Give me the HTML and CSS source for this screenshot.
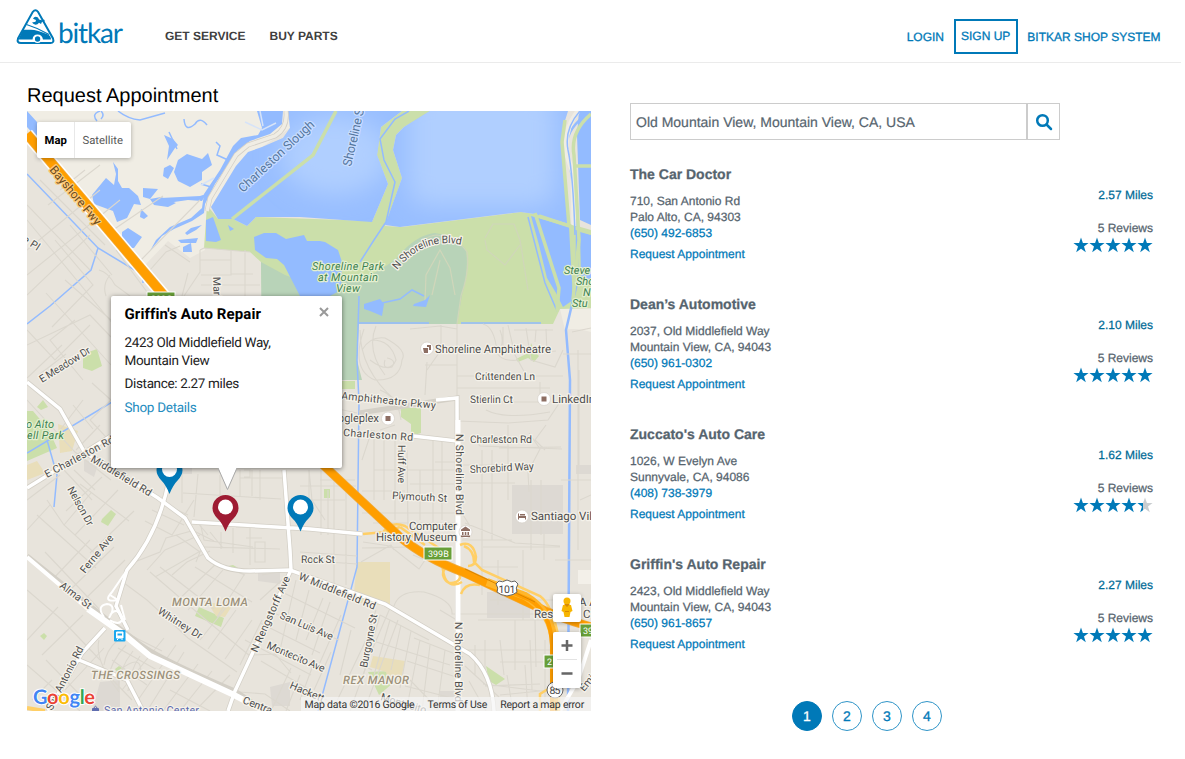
FILE: index.html
```html
<!DOCTYPE html>
<html lang="en">
<head>
<meta charset="utf-8">
<title>bitkar - Request Appointment</title>
<link rel="stylesheet" href="styles.css">
</head>
<body>
<svg width="0" height="0" class="defs" aria-hidden="true">
  <symbol id="star" viewBox="0 0 16 16"><path d="M8 .5 9.9 6H15.6L11 9.500 12.800 15.200 8 11.700 3.200 15.200 5 9.500.4 6H6.100Z"/></symbol>
</svg>
<header class="header">
  <a class="logo">
    <svg width="110" height="40" viewBox="15 8 110 40">
      <path class="logo-line" d="M32.800 11.800Q35.500 8.800 38 11.800L53 38.500Q54.500 43 50.500 43H21Q16.500 43 18 38.500Z"/>
      <path class="logo-fill" d="M23 29.800H31Q37 30 48 34.500 51 36 51 39.500H43Q42 34.500 37.500 34.500 33 34.500 32.500 39.500H18.500Z"/>
      <path class="logo-thin" d="M26.500 24.500Q38 28 49 34.500"/>
      <circle class="logo-wheel" cx="37.600" cy="39" r="3.300"/>
      <path class="logo-fill" d="M32 22.500 35.500 21.700 36 20 33 18.800Q34.500 15.500 38 17.500L39 19.500 42 20.300 44 19.500 45 21.300 42 21.800 41 24 39 22.700 37.500 24.300Q34 25.500 32 22.500Z"/>
      <text class="logo-text" x="58" y="43" textLength="65">bitkar</text>
    </svg>
  </a>
  <nav class="nav"><a>GET SERVICE</a><a>BUY PARTS</a></nav>
  <nav class="account"><a>LOGIN</a><a class="signup">SIGN UP</a><a>BITKAR SHOP SYSTEM</a></nav>
</header>
<main class="main">
  <section class="left">
    <h1>Request Appointment</h1>
    <div class="map">
      <svg class="map-art" width="564" height="600" viewBox="27 111 564 600">
        <defs>
          <filter id="soft" x="-50%" y="-50%" width="200%" height="200%"><feGaussianBlur stdDeviation="12"/></filter>
          <clipPath id="lagoon"><path d="M430 111H568L562 130 569 224 535 214 521 212 400 227 385 225 402 178 393 150 396 135 404 127Z"/></clipPath>
          <clipPath id="bay"><path d="M288 111H402L381 127 377 155 388 184 372 222 300 217 256 217 247 226 233 219 218 219 211 207 236 166 248 152 262 147 283 138 290 128Z"/></clipPath>
        </defs>
        <rect x="27" y="111" width="564" height="600" fill="#e8e4dc"/>
        <!-- salt marsh -->
        <path fill="#f0ede4" d="M40 111H290L290 128 262 147 236 166 211 207 205 250 190 258 168 241 145 265 130 250 27 130V111Z"/>
        <path fill="#f0ede4" d="M560 309H591V332Q575 327 565 330Z"/>
        <!-- parks -->
        <g fill="#cbdfaa">
          <path d="M207 205 218 219 233 219 247 226 256 217 372 221 385 226 402 227 521 212 535 214 591 230V308L560 309 553 324H359L300 300 262 296 261 262 250 252 204 248Z"/>
          <path d="M402 111 381 127 377 155 388 184 372 222 385 226 402 178 393 150 396 135 404 127 432 111Z"/>
          <path d="M83 354 97 349 102 366 92 371 83 368ZM37 407 43 400 48 407 41 410ZM27 411H33L49 430 57 448 27 461ZM342 381H355V389H342ZM401 408H421V433L411 436V424L401 417ZM516 359 530 352 531 343 535 352 539 356 534 362 528 358 518 362ZM102 519 111 510 116 514 108 526 101 522ZM224 567 233 565 240 569 234 572 226 570ZM195 616 199 607 224 618 221 627ZM40 636 44 633 47 636 44 640ZM115 669 119 666 124 669 117 672ZM368 672 390 671 393 683 379 695ZM486 666 505 679 496 685 489 681ZM324 489H330V498H324Z"/>
        </g>
        <path fill="#b8d3b8" d="M261 262 285 275 307 283 360 280Q380 271 396 259 415 235 435 233 456 236 466 250 469 270 462 295L457 324H359L357 360 362 380H262Z"/>
        <path d="M403 262Q420 236 437 235 458 238 467 252 470 270 461 296L457 324M485 238 493 224 514 224 520 240 528 290M485 240 487 250 505 265 520 245M425 302 426 275 440 250 450 268 455 295M432 295 440 260" fill="none" stroke="#d0d6ba" stroke-width="1.200"/>
        <g fill="#e9deba"><path d="M58 424 78 431 72 451 60 453ZM27 465 37 461 45 473 27 480ZM357 562H390V606L353 602ZM373 656 405 661 400 684 388 680 386 672 370 667ZM207 602 232 606 225 617 216 616Z"/></g>
        <g fill="#ddd9d3"><path d="M84 459 98 465 94 477 84 471ZM100 682 120 680V711H92ZM258 570H280V584L258 581ZM512 485H563V534H512ZM487 592H530V618H487ZM270 687 290 682V706H272ZM576 465H591V474H576ZM177 466H192V474H177ZM440 691H458V711H440Z"/></g>
        <!-- bay and ponds -->
        <g clip-path="url(#bay)"><rect x="200" y="111" width="210" height="120" fill="#98beff"/><ellipse cx="335" cy="155" rx="55" ry="40" fill="#b0cfff" filter="url(#soft)"/></g>
        <g clip-path="url(#lagoon)"><rect x="380" y="111" width="195" height="120" fill="#98beff"/><rect x="408" y="90" width="148" height="116" rx="20" fill="#b0cfff" filter="url(#soft)"/></g>
        <g fill="#93bbff">
          <path d="M257 111H283L282 124 270 134 250 141 238 150 215 184 205 204 204 213 192 221 174 229 162 236 150 251 156 240 170 227 191 218 202 208 204 194 220 170 233 146 241 138 258 135 262 128Z"/>
          <path d="M92 195 106 178 114 185 116 174 113 162 118 169 118 181 122 188 129 188 138 196 141 205 134 204 127 218 117 222 113 211 94 204ZM122 232 128 228 142 237 134 248 129 248 122 242ZM143 188 158 189 150 199 143 197ZM141 209 148 216 144 219 140 217ZM164 168 170 165 174 168 168 179 163 176ZM178 160 187 154 202 159 208 153 212 165 202 172 202 180 190 187 178 181 174 172ZM150 199 161 197 176 203 168 207 154 205ZM161 198 200 196 206 194 202 201 188 200 174 202 162 201ZM185 233 191 228 202 225 196 230 187 235ZM178 240 198 238 196 243 181 243ZM183 247 191 243 192 252 183 252ZM206 220 213 217 221 240 216 242 206 241ZM27 111 37 122V138L27 127ZM228 225 234 229 230 231ZM169 146 164 135 173 139 178 145 175 148 167 160Z"/>
          <path d="M254 237 264 233 276 233 286 239 304 235 307 241 320 241 325 242 338 250 342 262 341 290 330 296H311L300 296 284 265 277 259 266 258 255 250Z"/>
          <path d="M531 216 569 227 573 300 563 307 556 293 547 278 539 245ZM579 111H591V225L580 220 577 135ZM364 304 380 299 384 304 382 316 370 311 364 309ZM414 304 425 300 430 295 426 307 413 306ZM580 232 591 235V280L581 276Z"/>
        </g>
        <g class="stream">
          <path d="M424 296 412 290 400 299 382 303M358 323H429M461 323H541M100 111Q91 114 97 121M101 111Q105 115 101 119M118 111Q128 119 140 120L165 113M184 119Q185 133 195 124 200 116 207 125M216 142 220 146 217 155 228 160M169 132 177 149M211 187 201 184"/>
          <path d="M27 174 98 248 143 275V283M98 248 91 270 50 306 27 324M360 262 374 240 386 222 395 182 384 160 380 139 395 119 409 111M359 296 357 360 359 402 357 567 318 711M137 387 27 453 M47 440 57 475 54 507M528 217 545 283 557 311"/>
        </g>
        <path class="stream big" d="M591 111Q564 129 567 150 573 173 577 235V283L566 330 570 380 568 711"/>
        <path d="M578 111Q563 130 567 155L573 173 574 226" stroke="#f0ede4" stroke-width="5" fill="none"/>
        <path d="M591 114Q570 132 574 155L579 240 573 300M535 213 559 288 557 311M539 216 591 233M574 166H591M565 120 562 142 569 226M336 111 313 155 232 219" stroke="#cbdfaa" stroke-width="3.500" fill="none"/>
        <path d="M580 111Q564 129 568 150 573 173 575 235" class="stream"/>
        <path d="M260 111 263 126M245 122 262 130 276 123M201 185 214 178" stroke="#d6e3f8" stroke-width="1.500" fill="none"/>
        <path d="M286 111Q288 128 275 136L248 145 236 155 210 198 207 211" class="edge"/><path d="M286 111Q288 128 275 136L248 145 236 155 210 198 207 211" stroke="#f0ede4" stroke-width="3.500" fill="none"/>
        <!-- minor streets -->
        <g class="minor">
          <path d="M27 220 118 330M27 205 90 270M27 250 100 190M27 275 120 200M40 180 105 245M60 190 85 170M48 205 100 165M70 225 112 275M27 295 90 235M55 240 93 285 52 327M27 345 90 315 111 337M27 330 55 360 90 325M46 293 111 365M65 280 111 320M75 320 50 340 83 380M62 345 27 378M99 270Q108 272 115 285L130 296M110 275Q102 285 106 296M116 250 150 296M150 270 166 252 180 246M113 230 163 196M139 262 200 200"/>
          <path d="M200 250 204 248 250 252M200 250V272L184 296M200 260H231V275H201M231 250V275M245 250V296M231 274H253M201 285H260M190 262 165 245M188 273 182 296M27 400 75 452 111 480M92 383 111 400M40 374 66 354M83 400 60 430M100 425 76 450M73 405 93 429M111 400 90 420 120 452M64 470 92 500M27 500 60 475M74 470 95 490 M102 477 66 511 M80 484 129 521M47 500 64 525 102 560M37 515 96 568M27 530 50 505M64 525 91 493 M75 535 118 490M90 553 134 511M52 580 90 540M70 590 114 547M82 602 125 560M27 590 62 620 100 660M45 552 100 610M27 640 58 607M42 655 83 615M27 665 80 711M65 690 104 648M52 680 32 700M46 660 85 700"/>
          <path d="M145 521 172 535 194 500M152 510 184 525M166 505 188 515M132 563 160 552 166 538 195 530M147 570 165 550 200 535M155 577 204 549M172 575 187 562 210 551M176 535 200 552 196 562M188 528 214 541M197 522 208 535M120 580 147 600 188 638 237 672M150 572 206 620 250 656M160 567 214 609M195 567 252 602M207 560 245 575M188 610 223 570M175 603 217 563M217 617 244 575M208 649 236 610M200 640 228 605M225 659 252 620M240 665 262 620M164 638 122 690M176 645 138 700M184 652 147 711M198 664 163 711M212 671 180 711M130 635 162 651M118 648 157 670M112 660 147 685M105 672 132 700M99 640Q94 660 119 692M118 640Q106 650 104 665M126 645Q110 662 108 680M133 651Q118 670 118 690M140 656Q130 670 128 691M190 670 222 690M170 690 210 711M230 675 195 711M120 670Q145 650 140 680"/>
          <path d="M182 470V503M198 474 194 517M183 493 281 499M220 475V495M240 470V496M240 478H285M252 470V496M260 470V500M244 470H250V477H244M255 542H265V562H255ZM236 527H293M250 527V565M246 538H262M262 575 290 570M200 522 204 540 253 547M204 547 280 549M233 528V553M221 532V549M210 532 223 548M260 600 282 580M240 680 254 655 275 654 291 673M245 640 311 675M260 623 320 653M269 611 339 640M280 591 355 628M261 661 330 702M291 668 271 711M300 675 286 711M315 660 300 700M331 652 314 690M341 615 318 667M351 630 340 675M296 580 280 650M309 590 296 640M323 598 306 640M330 602 312 655M239 692 265 694 290 711M335 705 366 640 376 610M350 711 372 650 390 608M364 711 398 620"/>
          <path d="M309 470V498M321 470V535M334 470V590M346 489V585M300 486H356M300 527 357 535M300 552 357 556M361 562 391 545 394 550M362 548 410 547M363 542 390 546 419 569 425 560 413 555M300 560 357 564M309 470 312 500 325 520M320 480H355M328 490V535M345 500H310M362 460 372 430M362 491H405M374 430V500M384 437V500M395 440V520M407 450 408 530M420 470V520M433 440V540M442 440V520M362 513H457M373 523H455M395 535H457M374 470H456M410 484H458M435 462H458M360 330Q360 370 395 400M364 329Q350 370 375 380 400 381 402 360 408 350 385 338 370 336 362 350M372 340Q391 340 396 360 390 375 370 360M385 360Q382 370 392 367 397 360 387 358M376 326Q366 350 385 375M410 329 440 326 457 329M457 324V398M427 362 425 395M425 365H457M427 370 441 350 441 325M360 413 380 408 401 410M380 390Q398 397 401 420M320 405 357 413M341 432 356 435M380 430 395 425"/>
          <path d="M483 324Q495 327 497 353 502 362 519 360M496 354Q506 345 500 330M503 327V350M508 325 515 355 526 375M514 330H553M526 328 531 360 555 367 563 350M536 330 535 342M546 329 547 352 556 351M457 376H563M457 388H550M477 402H540V382M486 410Q505 420 550 412M457 421 508 423 548 420 560 402M546 425 535 440 545 450M529 433 540 449 528 472 529 492M499 448 561 447M508 425V500M482 450V540M492 450V540M470 436 480 446 562 449M462 483H515M465 523 515 543 560 546M482 510V595M483 547H560M460 510 470 526M479 567H518M498 560V605M523 550V620M531 480V550M541 480V535M462 540H512M544 534V560M578 350V550M561 480H591M555 560H591M579 370V465M580 500 591 495M563 354H591M572 332 591 328M457 465H505"/>
          <path d="M394 606Q399 590 424 592 453 600 452 614L549 614M380 615 362 680M390 620 374 675M401 625 391 670M411 631 400 688M420 640 408 702M430 645 422 711M445 650 437 711M370 640 450 665M380 615 429 640M362 665 372 670M407 661 456 677M414 638 463 657M405 686 460 700M410 680 440 711M440 610 460 622M463 650 515 650V620M475 645V675M485 640V670M500 640 504 675M515 640V670M530 640 532 690M490 650H552M500 662H555M485 686 540 684M500 695 550 690M507 675 513 711M525 665 528 711M545 640V704M490 600H553M478 620H550M535 620 536 667M465 666 499 697M469 681 486 711M483 684 540 691"/>
        </g>
        <!-- major streets -->
        <g class="edge"><path d="M27 382 60 409 85 453 106 465 158 498 185 518 208 558Q223 571 250 571L290 570 385 604 470 654Q492 673 494 711"/><path d="M27 488 111 436M169 480Q158 535 127 570L116 606 128 630M27 556 100 614 135 640Q150 655 235 691L265 711M105 628 82 653 48 711M79 660 127 680 143 711M284 470 290 550 291 570 235 691 228 711M192 522 310 529 362 534M359 413 457 398 458 711M413 436 457 441"/></g>
        <g class="major"><path d="M27 382 60 409 85 453 106 465 158 498 185 518 208 558Q223 571 250 571L290 570 385 604 470 654Q492 673 494 711"/><path d="M27 488 111 436M169 480Q158 535 127 570L116 606 128 630M105 628 82 653 48 711M79 660 127 680 143 711M284 470 290 550 291 570 235 691 228 711M192 522 310 529 362 534M436 400 457 398 458 711M413 436 457 441"/><path d="M127 570 110 595 118 600M104 617Q96 606 107 604 117 605 109 618M113 591Q101 603 118 600M110 615Q118 605 122 620 119 626 110 620M121 605 125 620" stroke-width="2"/></g>
        <path d="M27 557 88 609 122 633" fill="none" stroke="#fff" stroke-width="4"/><path d="M88 609 122 633 150 656 232 694 265 711" fill="none" stroke="#fff" stroke-width="6"/>
        <path d="M458 420V711" stroke="#fff" stroke-width="5"/>
        <path d="M578 570H591V584H578Z" fill="#f3f0e9"/><path d="M591 640 578 680 560 711" stroke="#fff" stroke-width="4" fill="none"/>
        <!-- highway ramps -->
        <g fill="none" stroke="#ffcf66" stroke-width="2.500">
          <path d="M363 534 385 532 400 527M382 534Q390 520 405 526L445 552M460 545Q473 540 476 557 476 566 468 566M458 570Q443 563 443 575 446 586 456 582 464 578 456 570M442 562Q443 575 446 580 452 588 462 582M461 594Q465 582 480 585M464 546Q474 550 474 562L482 570 540 596Q553 606 559 640V711M540 711V694L553 686M400 527 425 545"/>
        </g>
        <path d="M27 708 45 711" stroke="#ffcf66" stroke-width="4"/>
        <!-- freeway -->
        <path d="M27 134 172 305" stroke="#fff" stroke-width="13"/><path d="M27 134 172 305" stroke="#f0aa3a" stroke-width="10"/><path d="M27 134 172 305" stroke="#ff9e00" stroke-width="8.500"/>
        <g fill="none"><path d="M320 462 400 537Q425 558 465 573L535 606Q556 617 591 627" stroke="#f0aa3a" stroke-width="9"/><path d="M320 462 400 537Q425 558 465 573L535 606Q556 617 591 627" stroke="#ff9e00" stroke-width="7.500"/>
        <path d="M487 582 525 596Q553 612 554 645V711" stroke="#ffb62b" stroke-width="8"/><path d="M500 587 530 600Q551 613 552 645V711" stroke="#ff9e00" stroke-width="4"/><path d="M465 569 535 602" stroke="#d98500" stroke-width="1"/></g>
        <!-- exit signs -->
        <g class="exit"><rect x="147" y="292" width="28" height="13"/><rect x="424" y="547" width="28" height="13"/><rect x="544" y="655" width="14" height="13"/><rect x="580" y="624" width="16" height="13"/>
        <text x="151" y="302">399C</text><text x="428" y="557">399B</text><text x="547" y="665">2</text><text x="583" y="634">39</text></g>
        <path class="shield" d="M499 581Q502 583 507 580 512 583 515 581L518 584Q515 588 517 592 514 595 507 596 500 595 497 592 499 588 496 584Z"/><text x="498.500" y="592.500" class="route" textLength="17">101</text>
        <circle class="shield" cx="555" cy="690" r="8"/><text x="549.500" y="694" class="route" textLength="11">85</text>
        <!-- places -->
        <g class="poi-disc"><circle cx="427" cy="348.500" r="6.500"/><circle cx="388" cy="418.500" r="6.500"/><circle cx="544" cy="399" r="6.500"/><circle cx="522" cy="516.500" r="6.500"/><circle cx="465.500" cy="532" r="6.500"/></g>
        <g fill="#8d6e63"><path d="M423 348H428V353H424ZM427 345H431V350H429V347H427ZM385.500 416H390.500V421H385.500ZM541.500 396.500H546.500V401.500H541.500ZM518 513.500H519V516H526V519.500H525V518H519V519.500H518ZM520 514H525V515.500H520ZM461 529.500 465.500 526.500 470 529.500V531H461ZM462 532H463.500V535H462ZM464.800 532H466.300V535H464.800ZM467.500 532H469V535H467.500ZM461 535.500H470V537H461Z"/></g>
        <rect x="114" y="630" width="11.500" height="11.500" rx="1" fill="#1aa7ee"/><path d="M116.500 632H123V638H116.500ZM117 640 118.500 638.500M122.500 640 121 638.500" fill="#fff" stroke="#fff"/><path d="M117.500 633.500H122V635.500H117.500Z" fill="#1aa7ee"/>
        <rect x="92" y="708" width="7" height="5" rx="1" fill="#5f6db0"/><path d="M94 708Q95.500 704.500 97 708" fill="none" stroke="#5f6db0"/>
        <g class="labels">
          <text class="hw" transform="translate(49 170) rotate(50)" textLength="73">Bayshore Fwy</text>
          <text class="sea" transform="translate(243 193) rotate(-43)" textLength="99">Charleston Slough</text>
          <text class="sea" transform="translate(351 167) rotate(-77)" textLength="59">Shoreline S</text>
          <text transform="translate(22 241) rotate(33)" textLength="18">e Pl</text>
          <text transform="translate(213 277) rotate(88)">Mari</text>
          <path id="shore-curve" fill="none" stroke="none" d="M397 270Q424 236 462 245"/><text><textPath href="#shore-curve" textLength="73">N Shoreline Blvd</textPath></text>
          <g class="park"><text x="312" y="270" textLength="72">Shoreline Park</text><text x="318" y="281" textLength="60">at Mountain</text><text x="336" y="292" textLength="24">View</text><text x="564" y="274">Steve</text><text x="576" y="285">Sho</text><text x="583" y="296">N</text><text x="572" y="307">Stu</text><text x="26" y="428" textLength="28">o Alto</text><text x="27" y="439" textLength="37">ell Park</text></g>
          <text transform="translate(42 383) rotate(-32)" textLength="58">E Meadow Dr</text>
          <text transform="translate(47 478) rotate(-28)" textLength="77">E Charleston Rd</text>
          <text transform="translate(90 461) rotate(31)" textLength="69">Middlefield Rd</text>
          <text transform="translate(67 489) rotate(61)" textLength="43">Nelson Dr</text>
          <text transform="translate(85 574) rotate(-51)" textLength="46">Ferne Ave</text>
          <text transform="translate(59 587) rotate(37)" textLength="37">Alma St</text>
          <text transform="translate(157 613) rotate(32)" textLength="50">Whitney Dr</text>
          <text transform="translate(52 711) rotate(-63)" textLength="70">San Antonio Rd</text>
          <text transform="translate(257 653) rotate(-66)" textLength="82">N Rengstorff Ave</text>
          <text transform="translate(279 618) rotate(23)" textLength="57">San Luis Ave</text>
          <text transform="translate(266 648) rotate(23)" textLength="62">Montecito Ave</text>
          <text transform="translate(289 688) rotate(23)">Hackett</text>
          <text transform="translate(242 703) rotate(21)">Centra</text>
          <text transform="translate(298 579) rotate(22)" textLength="82">W Middlefield Rd</text>
          <text x="301" y="563" textLength="34">Rock St</text>
          <text transform="translate(367 668) rotate(-79)" textLength="54">Burgoyne St</text>
          <text transform="translate(380 700) rotate(17)">Montecito</text>
          <text transform="translate(341 399) rotate(6)" textLength="95">Amphitheatre Pkwy</text>
          <text transform="translate(343 436) rotate(4)" textLength="70">Charleston Rd</text>
          <text transform="translate(398 445) rotate(90)" textLength="38">Huff Ave</text>
          <text transform="translate(456 434) rotate(90)" textLength="81">N Shoreline Blvd</text>
          <text transform="translate(455 622) rotate(90)" textLength="80">N Shoreline Blvd</text>
          <text x="475" y="380" textLength="60">Crittenden Ln</text><text x="470" y="403" textLength="43">Stierlin Ct</text>
          <text transform="translate(470 443)" textLength="62">Charleston Rd</text><text transform="translate(470 473) rotate(-3)" textLength="64">Shorebird Way</text>
          <text transform="translate(392 499) rotate(3)" textLength="55">Plymouth St</text>
          <text x="435" y="353" class="poi" textLength="116">Shoreline Amphitheatre</text><text x="552" y="403" class="poi">LinkedIn</text><text x="324" y="422" class="poi" textLength="55">Googleplex</text>
          <text x="531" y="520" class="poi">Santiago Vil</text><text x="409" y="530" class="poi" textLength="48">Computer</text><text x="376" y="541" class="poi" textLength="81">History Museum</text>
          <text x="534" y="618" class="poi">Res</text><text x="579" y="606" class="poi">A A</text><text x="583" y="618" class="poi">C</text>
          <g class="district"><text x="172" y="606" textLength="76">MONTA LOMA</text><text x="91" y="679" textLength="89">THE CROSSINGS</text><text x="343" y="684" textLength="66">REX MANOR</text></g>
          <text x="104" y="714" class="shop" textLength="95">San Antonio Center</text>
          <text transform="translate(584 692) rotate(-50)">Emi</text>
        </g>
        <g class="google"><text x="33" y="703.500" textLength="62"><tspan fill="#4285f4">G</tspan><tspan fill="#ea4335">o</tspan><tspan fill="#fbbc05">o</tspan><tspan fill="#4285f4">g</tspan><tspan fill="#34a853">l</tspan><tspan fill="#ea4335">e</tspan></text></g>
        <!-- shop markers -->
        <g id="pins"><path fill="#0079b8" d="M169.500 494Q166 485 161 480 156.500 475 156.500 470A13 13 0 0 1 182.500 470Q182.500 475 178 480 173 485 169.500 494Z"/><circle cx="169.500" cy="469.500" r="7.500" fill="#fff"/>
        <path fill="#9e1b32" d="M225.500 531.500Q222 522.500 217 518 212.500 513 212.500 508A13 13 0 0 1 238.500 508Q238.500 513 234 518 229 522.500 225.500 531.500Z"/><circle cx="225.500" cy="507" r="7.500" fill="#fff"/>
        <path fill="#0079b8" d="M300.500 531.500Q297 522.500 292 518 287.500 513 287.500 508A13 13 0 0 1 313.500 508Q313.500 513 309 518 304 522.500 300.500 531.500Z"/><circle cx="300.500" cy="507" r="7.500" fill="#fff"/></g>
      </svg>
      <div class="map-type"><span class="on">Map</span><span>Satellite</span></div>
      <div class="popup">
        <svg class="close" width="10" height="10" viewBox="0 0 10 10"><path d="M1 1 9 9M9 1 1 9"/></svg>
        <svg class="tail" width="22" height="24" viewBox="0 0 22 24"><path d="M1 0 10.500 22.500 20 0Z" fill="#fff"/><path d="M1 1 10.500 22.500 20 1" fill="none" stroke="#aaa"/></svg>
        <h2>Griffin's Auto Repair</h2>
        <p>2423 Old Middlefield Way,<br>Mountain View</p>
        <p>Distance: 2.27 miles</p>
        <a>Shop Details</a>
      </div>
      <div class="pegman"><svg width="14" height="22" viewBox="0 0 14 22"><circle cx="7" cy="4" r="3.500" fill="#f7b500"/><path d="M3 8H11L12.500 14 10.500 15 9.500 20H4.500L3.500 15 1.500 14Z" fill="#f7b500"/><path d="M4 7H10L7 10ZM5 14H9V15H5Z" fill="#d98a00"/></svg></div>
      <div class="zoom"><svg width="28" height="56" viewBox="0 0 28 56"><path d="M14 8V19M8.500 13.500H19.500M8.500 41.500H19.500" stroke="#666" stroke-width="2.500"/><path d="M4 27.500H24" stroke="#e3e3e3"/></svg></div>
      <div class="credits"><span>Map data ©2016 Google</span><span>Terms of Use</span><span>Report a map error</span></div>
    </div>
  </section>
  <section class="right">
    <div class="search"><div class="field">Old Mountain View, Mountain View, CA, USA</div><div class="go"><svg width="18" height="18" viewBox="0 0 18 18"><circle cx="7.500" cy="7.500" r="5.300"/><path d="M11.500 11.500 16 16"/></svg></div></div>
    <article class="shop-row"><div><h3>The Car Doctor</h3><p>710, San Antonio Rd<br>Palo Alto, CA, 94303</p><a>(650) 492-6853</a><a class="request">Request Appointment</a></div><div class="rating"><b>2.57 Miles</b><span>5 Reviews</span><div class="stars"><svg><use href="#star"/></svg><svg><use href="#star"/></svg><svg><use href="#star"/></svg><svg><use href="#star"/></svg><svg><use href="#star"/></svg></div></div></article>
    <article class="shop-row"><div><h3>Dean’s Automotive</h3><p>2037, Old Middlefield Way<br>Mountain View, CA, 94043</p><a>(650) 961-0302</a><a class="request">Request Appointment</a></div><div class="rating"><b>2.10 Miles</b><span>5 Reviews</span><div class="stars"><svg><use href="#star"/></svg><svg><use href="#star"/></svg><svg><use href="#star"/></svg><svg><use href="#star"/></svg><svg><use href="#star"/></svg></div></div></article>
    <article class="shop-row"><div><h3>Zuccato's Auto Care</h3><p>1026, W Evelyn Ave<br>Sunnyvale, CA, 94086</p><a>(408) 738-3979</a><a class="request">Request Appointment</a></div><div class="rating"><b>1.62 Miles</b><span>5 Reviews</span><div class="stars"><svg><use href="#star"/></svg><svg><use href="#star"/></svg><svg><use href="#star"/></svg><svg><use href="#star"/></svg><svg viewBox="0 0 16 16"><defs><linearGradient id="part"><stop offset=".34" stop-color="#0079b8"/><stop offset=".34" stop-color="#c9cdd0"/></linearGradient></defs><path fill="url(#part)" d="M8 .5 9.900 6H15.600L11 9.500 12.800 15.200 8 11.700 3.200 15.200 5 9.500.4 6H6.100Z"/></svg></div></div></article>
    <article class="shop-row"><div><h3>Griffin's Auto Repair</h3><p>2423, Old Middlefield Way<br>Mountain View, CA, 94043</p><a>(650) 961-8657</a><a class="request">Request Appointment</a></div><div class="rating"><b>2.27 Miles</b><span>5 Reviews</span><div class="stars"><svg><use href="#star"/></svg><svg><use href="#star"/></svg><svg><use href="#star"/></svg><svg><use href="#star"/></svg><svg><use href="#star"/></svg></div></div></article>
    <nav class="pages"><a class="current">1</a><a>2</a><a>3</a><a>4</a></nav>
  </section>
</main>
</body>
</html>
```
FILE: styles.css
```css
* { box-sizing: border-box; }
body { margin: 0; height: 759px; overflow: hidden; background: #fff; font-family: "Liberation Sans", Arial, sans-serif; font-size: 12px; color: #56646e; text-rendering: geometricPrecision; }
h1, h2, h3, p { margin: 0; }
a { color: #0079b8; }
.defs { display: block; }
.header { height: 63px; width: 1181px; border-bottom: 1px solid #ebebeb; display: flex; align-items: flex-start; padding-left: 15px; }
.logo { width: 150px; padding-top: 8px; }
.logo svg { display: block; }
.logo-line { fill: #fff; stroke: #0079b8; stroke-width: 2; }
.logo-fill { fill: #0079b8; }
.logo-thin { fill: none; stroke: #0079b8; stroke-width: 1.2; }
.logo-wheel { fill: #0079b8; stroke: #fff; stroke-width: 1.2; }
.logo-text { font: 28px Lato, sans-serif; fill: #0079b8; }
.nav { display: flex; gap: 24px; padding-top: 29px; }
.nav a { color: #3f3f3f; font-weight: bold; line-height: 14px; }
.account { display: flex; gap: 9.500px; margin-left: auto; padding: 19px 20.500px 0 0; }
.account a { line-height: 14px; padding-top: 11px; -webkit-text-stroke: .3px #0079b8; }
.account .signup { height: 35px; padding: 8px 5.500px 0; border: 2px solid #0079b8; }
.main { display: flex; gap: 39px; padding-left: 27px; }
.left { width: 564px; }
.left h1 { height: 48px; padding-top: 21px; font-size: 20px; font-weight: normal; line-height: 24px; color: #000; }
.map { position: relative; width: 564px; height: 600px; overflow: hidden; }
.map-art { display: block; }
.stream { fill: none; stroke: #93bbff; stroke-width: 1.5; }
.stream.big { stroke-width: 2.5; }
.minor path { fill: none; stroke: #dbd7ce; stroke-width: 1.1; }
.edge, .edge path { fill: none; stroke: #d3cfc6; stroke-width: 5; }
.major path { fill: none; stroke: #fff; stroke-width: 3.5; }
.major path[stroke-width="2"] { stroke-width: 2; }
.exit rect { fill: #689f38; stroke: #fff; stroke-width: 1; }
.exit text { font: 9px Roboto, sans-serif; fill: #fff; }
.shield { fill: #fff; stroke: #666; stroke-width: 1; }
.route { font: 10.500px Roboto, sans-serif; fill: #444; }
.poi-disc { fill: #fff; stroke: #d5d0c8; stroke-width: .7; }
.labels { font: 10.500px Roboto, sans-serif; fill: #4d4d4d; stroke: #f5f2ea; stroke-width: 2.5px; stroke-linejoin: round; paint-order: stroke; }
.labels .poi { font-size: 11.500px; fill: #4d4d4d; }
.labels .hw { font-size: 12px; fill: #6b4a1d; stroke: #ffca79; }
.labels .sea { font-size: 12.500px; fill: #55779f; stroke: #c8ddff; }
.labels .park { font-size: 11px; font-style: italic; fill: #3e8252; stroke: #e4efcf; }
.labels .district { font-size: 11.500px; font-style: italic; font-weight: 500; fill: #9c917b; }
.labels .shop { font-size: 11px; fill: #5f6db0; }
.google { font: bold 20px Lato, sans-serif; stroke: #fff; stroke-width: 2px; paint-order: stroke; }
.map-type { position: absolute; left: 10px; top: 11px; width: 94px; height: 36px; display: flex; background: #fff; border-radius: 2px; box-shadow: 0 1px 4px rgba(0,0,0,.3); font: 11.300px/37px Roboto, sans-serif; color: #565656; }
.map-type span { padding-left: 7.500px; }
.map-type .on { width: 38px; color: #000; font-weight: 700; border-right: 1px solid #e8e8e8; }
.popup { position: absolute; left: 84px; top: 185px; width: 230.500px; height: 172px; padding: 9px 13.500px; background: #fff; border-radius: 2px; box-shadow: 0 1px 5px rgba(0,0,0,.5); font: 13.500px/18px Roboto, sans-serif; color: #222; }
.popup h2 { font-size: 15px; line-height: 18px; font-weight: 700; letter-spacing: .1px; color: #000; margin-bottom: 10.500px; }
.popup p { letter-spacing: -.35px; margin-bottom: 5px; }
.popup a { display: block; padding-top: 1px; letter-spacing: -.28px; color: #248cc0; }
.close { position: absolute; right: 13px; top: 11px; }
.close path { stroke: #999; stroke-width: 2; }
.tail { position: absolute; left: 105.500px; top: 171px; }
.pegman, .zoom { position: absolute; left: 526px; width: 28px; background: #fff; border-radius: 2px; box-shadow: 0 1px 4px rgba(0,0,0,.3); }
.pegman { top: 483px; height: 28px; padding: 3px 7px; }
.zoom { top: 521px; height: 56px; }
.zoom svg, .pegman svg { display: block; }
.credits { position: absolute; right: 0; bottom: 0; height: 14px; display: flex; gap: 13px; padding: 0 7px 0 4px; background: rgba(245,245,245,.7); font: 10.500px/15px Roboto, sans-serif; letter-spacing: -.21px; color: #333; white-space: nowrap; }
.right { width: 524px; padding-top: 40px; }
.search { display: flex; width: 430px; height: 37px; }
.field { width: 397px; border: 1px solid #ccc; padding-left: 5px; font-size: 14px; line-height: 36px; white-space: nowrap; -webkit-text-stroke: .2px; }
.go { width: 33px; border: 1px solid #ccc; padding: 9px 7px; }
.go svg { display: block; fill: none; stroke: #0079b8; stroke-width: 2.5; stroke-linecap: round; }
.shop-row { height: 130px; display: flex; justify-content: space-between; padding: 25px 1px 0 0; -webkit-text-stroke: .25px; }
.shop-row h3 { font-size: 14px; line-height: 18px; height: 28px; color: #56646e; }
.shop-row p, .shop-row a { display: block; line-height: 16px; }
.shop-row .request { margin-top: 5px; }
.rating { width: 100px; display: flex; flex-direction: column; align-items: flex-end; padding-top: 22px; line-height: 16px; }
.rating b { font-weight: normal; color: #006b96; margin-bottom: 17px; }
.rating span { margin-bottom: 1px; }
.stars { display: flex; }
.stars svg { width: 16px; height: 16px; fill: #0079b8; }
.pages { display: flex; gap: 10px; padding: 41px 0 0 162px; }
.pages a { width: 30px; height: 30px; border: 1px solid #3095c8; border-radius: 50%; text-align: center; font-size: 14px; line-height: 28px; -webkit-text-stroke: .3px; }
.pages .current { background: #0079b8; border-color: #0079b8; color: #fff; }
```
